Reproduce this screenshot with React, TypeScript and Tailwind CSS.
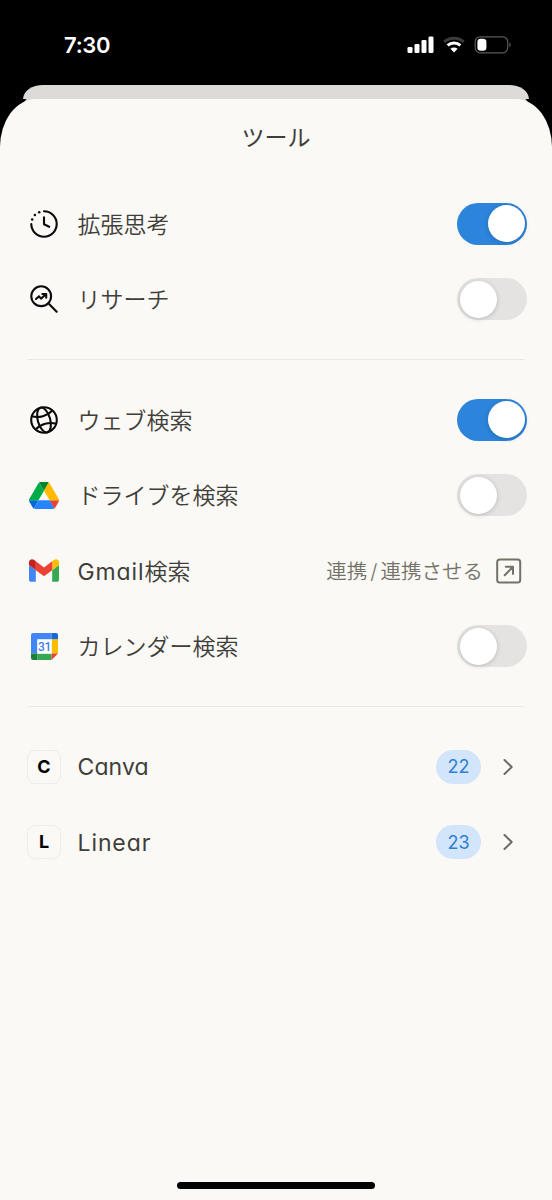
import { useState } from 'react'
import type { ReactNode } from 'react'

interface SearchTool {
  id: string
  label: ReactNode
  icon: ReactNode
  enabled?: boolean
  canConnect?: boolean
}

interface Connector {
  name: string
  count: number
  tracking: string
}

const THINKING_TOOLS: SearchTool[] = [
  { id: 'thinking', label: '拡張思考', icon: <ThinkingIcon />, enabled: true },
  { id: 'research', label: 'リサーチ', icon: <ResearchIcon />, enabled: false },
]

const SEARCH_TOOLS: SearchTool[] = [
  { id: 'web', label: 'ウェブ検索', icon: <GlobeIcon />, enabled: true },
  { id: 'drive', label: 'ドライブを検索', icon: <DriveIcon />, enabled: false },
  {
    id: 'gmail',
    label: (
      <>
        <span className="font-normal tracking-[0.9px]">Gmail</span>検索
      </>
    ),
    icon: <GmailIcon />,
    canConnect: true,
  },
  { id: 'calendar', label: 'カレンダー検索', icon: <CalendarIcon />, enabled: false },
]

const CONNECTORS: Connector[] = [
  { name: 'Canva', count: 22, tracking: 'tracking-[0.1px]' },
  { name: 'Linear', count: 23, tracking: 'tracking-[0.9px]' },
]

export default function App() {
  return (
    <div className="flex h-[1200px] w-[552px] flex-col overflow-hidden bg-black font-['Inter','Noto_Sans_CJK_JP',sans-serif] text-[#3f3e3a] [font-feature-settings:'cv11']">
      <StatusBar />

      {/* Sheet behind the current one */}
      <div className="mx-[23px] h-[14px] shrink-0 rounded-t-[20px_14px] bg-[#dcdbd7] shadow-[0_8px_0_#dcdbd7]" />

      <main className="z-10 flex flex-1 flex-col rounded-t-[36px_48px] bg-[#faf9f5]">
        <h1 className="flex h-[76px] shrink-0 items-center justify-center pt-[2px] text-[23px] leading-none">ツール</h1>

        <div className="mt-[11px]">
          {THINKING_TOOLS.map((tool) => (
            <ToolRow key={tool.id} tool={tool} />
          ))}
        </div>
        <Divider />
        <div>
          {SEARCH_TOOLS.map((tool) => (
            <ToolRow key={tool.id} tool={tool} />
          ))}
        </div>
        <Divider />
        <div>
          {CONNECTORS.map((connector) => (
            <ConnectorRow key={connector.name} connector={connector} />
          ))}
        </div>

        {/* Home indicator */}
        <div className="mx-auto mt-auto mb-[11px] h-[7px] w-[198px] rounded-full bg-black" />
      </main>
    </div>
  )
}

function StatusBar() {
  return (
    <header className="flex h-[85px] shrink-0 items-center justify-between pr-[40px] pl-[64px] text-white">
      <span className="mt-[4px] text-[22px] leading-none font-semibold tracking-[-0.3px]">7:30</span>
      <div className="mt-[4px] flex items-center">
        <SignalIcon />
        <WifiIcon />
        <BatteryIcon />
      </div>
    </header>
  )
}

function Divider() {
  return <hr className="mx-[28px] my-[22px] h-px shrink-0 border-0 bg-[#e8e7e3]" />
}

function ToolRow({ tool }: { tool: SearchTool }) {
  return (
    <div className="flex h-[75.5px] items-center pr-[25px] pl-[28px]">
      <span className="mr-[17.5px] flex size-8 items-center justify-center">{tool.icon}</span>
      <span className="flex-1 pt-[3px] text-[23px] leading-none font-[350]">{tool.label}</span>
      {tool.canConnect ? (
        <button className="mr-[5px] flex items-center gap-[13px] text-[#737269]">
          <span className="pt-[2px] text-[20.5px] leading-none font-[350]">
            連携<span className="mx-[3px]">/</span>連携させる
          </span>
          <OpenIcon />
        </button>
      ) : (
        <Toggle initial={!!tool.enabled} />
      )}
    </div>
  )
}

function ConnectorRow({ connector }: { connector: Connector }) {
  return (
    <button className="flex h-[75.5px] w-full items-center pr-[37px] pl-[27px] text-left">
      <span className="mr-[16.5px] flex size-[34px] items-center justify-center rounded-[8px] border border-[#eeede9] text-[18px] leading-none font-bold text-black">
        {connector.name[0]}
      </span>
      <span className={`flex-1 pt-[2px] text-[23px] leading-none ${connector.tracking}`}>{connector.name}</span>
      <span className="mr-[21px] flex h-[34px] w-[45px] items-center justify-center rounded-full bg-[#d3e5fa] pt-px text-[18px] leading-none text-[#2f7fd3]">
        {connector.count}
      </span>
      <ChevronIcon />
    </button>
  )
}

function Toggle({ initial }: { initial: boolean }) {
  const [on, setOn] = useState(initial)

  return (
    <button
      role="switch"
      aria-checked={on}
      onClick={() => setOn(!on)}
      className={`flex h-[42px] w-[70px] items-center rounded-full px-[2.5px] ${on ? 'justify-end bg-[#2c84db]' : 'justify-start bg-[#e4e3e1]'}`}
    >
      <span className="size-[37px] rounded-full bg-white shadow-[0_1px_5px_rgba(0,0,0,0.18)]" />
    </button>
  )
}

function SignalIcon() {
  return (
    <svg className="mr-[9px]" width="27" height="18" viewBox="0 0 27 18" fill="currentColor">
      <rect x="0.5" y="11" width="5" height="6" rx="1.3" />
      <rect x="7.5" y="8" width="5" height="9" rx="1.3" />
      <rect x="14.5" y="4" width="5" height="13" rx="1.3" />
      <rect x="21.5" y="0.5" width="5" height="16.5" rx="1.3" />
    </svg>
  )
}

function WifiIcon() {
  return (
    <svg className="mr-[9px]" width="22" height="18" viewBox="0 0 22 18" fill="none" stroke="currentColor" strokeWidth="3">
      <path d="M1.3 5.8C6.8 0.9 15.2 0.9 20.7 5.8" stroke="#3c3c3c" />
      <path d="M4.6 9.4C8.3 6.2 13.7 6.2 17.4 9.4" />
      <path d="M11 16.6L7.4 12.8C9.5 11 12.5 11 14.6 12.8Z" fill="currentColor" stroke="none" />
    </svg>
  )
}

function BatteryIcon() {
  return (
    <svg width="38" height="18" viewBox="0 0 38 18" fill="none">
      <rect x="1.2" y="0.8" width="32.5" height="16" rx="5" stroke="#5a5a5a" strokeWidth="1.2" />
      <rect x="3.4" y="2.8" width="9" height="12" rx="3.3" fill="currentColor" />
      <path d="M35.4 6.3C37.2 7.2 37.2 10.3 35.4 11.2Z" fill="#5a5a5a" />
    </svg>
  )
}

function ThinkingIcon() {
  return (
    <svg width="32" height="32" viewBox="0 0 32 32" fill="none" stroke="#0b0b0b" strokeWidth="2.1" strokeLinecap="round" strokeLinejoin="round">
      <path d="M16 3.3A12.7 12.7 0 1 1 3.3 16" />
      <path d="M16 9.3V16.2L21.2 18.8" />
      <g fill="#0b0b0b" stroke="none">
        <circle cx="11.2" cy="4.3" r="1.25" />
        <circle cx="6.9" cy="7.1" r="1.25" />
        <circle cx="4.2" cy="11.4" r="1.25" />
      </g>
    </svg>
  )
}

function ResearchIcon() {
  return (
    <svg width="32" height="32" viewBox="0 0 32 32" fill="none" stroke="#0b0b0b" strokeWidth="2.1" strokeLinecap="round" strokeLinejoin="round">
      <circle cx="13.2" cy="13.2" r="9.9" />
      <path d="M20.3 20.3L28.7 28.7" />
      <path d="M8 16L11 13.3L13 15.7L17.8 11.3" />
      <path d="M14.4 11H18.2V14.8" />
    </svg>
  )
}

function GlobeIcon() {
  return (
    <svg width="32" height="32" viewBox="0 0 32 32" fill="none" stroke="#0b0b0b" strokeWidth="2.1">
      <circle cx="16" cy="16" r="12.8" />
      <g transform="rotate(-16 16 16)">
        <ellipse cx="16" cy="16" rx="6.2" ry="12.8" />
        <path d="M5.3 9C11.5 13 20.5 13 26.7 9M5.3 23C11.5 19 20.5 19 26.7 23" />
      </g>
    </svg>
  )
}

function DriveIcon() {
  return (
    <svg width="30" height="27" viewBox="0 0 87.3 78">
      <path d="m6.6 66.85 3.85 6.65c.8 1.4 1.95 2.5 3.3 3.3l13.75-23.8h-27.5c0 1.55.4 3.1 1.2 4.5z" fill="#0066da" />
      <path d="m43.65 25-13.75-23.8c-1.35.8-2.5 1.9-3.3 3.3l-25.4 44a9.06 9.06 0 0 0 -1.2 4.5h27.5z" fill="#00ac47" />
      <path d="m73.55 76.8c1.35-.8 2.5-1.9 3.3-3.3l1.6-2.75 7.65-13.25c.8-1.4 1.2-2.95 1.2-4.5h-27.502l5.852 11.5z" fill="#ea4335" />
      <path d="m43.65 25 13.75-23.8c-1.35-.8-2.9-1.2-4.5-1.2h-18.5c-1.6 0-3.15.45-4.5 1.2z" fill="#00832d" />
      <path d="m59.8 53h-32.3l-13.75 23.8c1.35.8 2.9 1.2 4.5 1.2h50.8c1.6 0 3.15-.45 4.5-1.2z" fill="#2684fc" />
      <path d="m73.4 26.5-12.7-22c-.8-1.4-1.95-2.5-3.3-3.3l-13.75 23.8 16.15 28h27.45c0-1.55-.4-3.1-1.2-4.5z" fill="#ffba00" />
    </svg>
  )
}

function GmailIcon() {
  return (
    <svg width="30" height="23" viewBox="52 42 88 66">
      <path fill="#4285f4" d="M58 108h14V74L52 59v43c0 3.32 2.69 6 6 6" />
      <path fill="#34a853" d="M120 108h14c3.32 0 6-2.69 6-6V59l-20 15" />
      <path fill="#fbbc04" d="M120 48v26l20-15v-8c0-7.42-8.47-11.65-14.4-7.2" />
      <path fill="#ea4335" d="M72 74V48l24 18 24-18v26L96 92" />
      <path fill="#c5221f" d="M52 51v8l20 15V48l-5.6-4.2c-5.94-4.45-14.4-.22-14.4 7.2" />
    </svg>
  )
}

function CalendarIcon() {
  return (
    <svg width="27" height="27" viewBox="0 0 27 27">
      <path d="M2 0H20.6V6.4H6.4V20.6H0V2A2 2 0 0 1 2 0Z" fill="#4285f4" />
      <path d="M20.6 0H25A2 2 0 0 1 27 2V6.4H20.6Z" fill="#1967d2" />
      <path d="M20.6 6.4H27V20.6H20.6Z" fill="#fbbc04" />
      <path d="M6.4 20.6H20.6V27H6.4Z" fill="#34a853" />
      <path d="M0 20.6H6.4V27H2A2 2 0 0 1 0 25Z" fill="#188038" />
      <path d="M20.6 20.6H27L20.6 27Z" fill="#ea4335" />
      <path d="M6.4 6.4H20.6V20.6H6.4Z" fill="#fff" />
      <text x="13.4" y="17.8" textAnchor="middle" fontSize="12" fontWeight="500" fill="#3c7bea" fontFamily="Roboto" letterSpacing="-0.5">
        31
      </text>
    </svg>
  )
}

function OpenIcon() {
  return (
    <svg width="26" height="26" viewBox="0 0 26 26" fill="none" stroke="currentColor" strokeWidth="2" strokeLinecap="round" strokeLinejoin="round">
      <rect x="1.2" y="1.5" width="23" height="23" rx="2.5" />
      <path d="M8.7 17.3L16.8 9M9.8 8.8H17V16" />
    </svg>
  )
}

function ChevronIcon() {
  return (
    <svg width="13" height="18" viewBox="0 0 13 18" fill="none" stroke="#6b6a65" strokeWidth="2" strokeLinecap="round" strokeLinejoin="round">
      <path d="M2.5 2L9.7 9L2.5 16" />
    </svg>
  )
}
